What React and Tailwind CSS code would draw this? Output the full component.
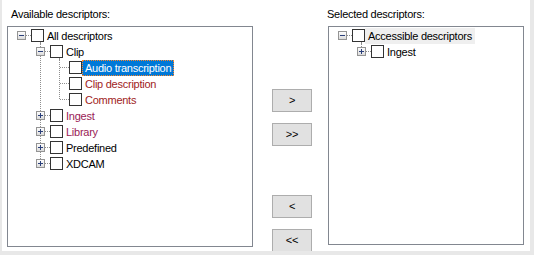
import React from "react";

const LINE = "#8e8e8e";

function cx(level) {
  return 13 + 19 * level;
}

function RowLines({ level, expander, lines }) {
  const w = cx(level) + 10;
  const c = cx(level);
  return (
    <svg width={w} height={16} className="shrink-0 block">
      {lines.map((l, i) => {
        const x = cx(l.col) + 0.5;
        const y2 = l.type === "top" ? 8 : 16;
        return (
          <line key={i} x1={x} y1={0} x2={x} y2={y2} stroke={LINE} strokeWidth={1} strokeDasharray="1 1" />
        );
      })}
      <line x1={expander ? c + 5 : c + 1} y1={7.5} x2={c + 10} y2={7.5} stroke={LINE} strokeWidth={1} strokeDasharray="1 1" />
      {expander && (
        <g>
          <defs>
            <linearGradient id={`g${level}`} x1="0" y1="0" x2="0" y2="1">
              <stop offset="0" stopColor="#ffffff" />
              <stop offset="1" stopColor="#d9d9d9" />
            </linearGradient>
          </defs>
          <rect x={c - 3.5} y={3.5} width={8} height={8} fill={`url(#g${level})`} stroke="#949494" strokeWidth={1} />
          <line x1={c - 2} y1={7.5} x2={c + 3} y2={7.5} stroke="#2a3f7a" strokeWidth={1} />
          {expander === "plus" && (
            <line x1={c + 0.5} y1={5} x2={c + 0.5} y2={10} stroke="#2a3f7a" strokeWidth={1} />
          )}
        </g>
      )}
    </svg>
  );
}

function Row({ level, expander, lines, tail, label, color, selected, hover }) {
  let spanCls = "h-4 px-[2px] border border-transparent leading-[14px] whitespace-nowrap";
  if (selected) spanCls = "h-4 px-[2px] border border-dotted border-[#ff8728] bg-[#0078d7] text-white leading-[14px] whitespace-nowrap";
  if (hover) spanCls = "h-4 px-[2px] border border-transparent bg-[#efefef] leading-[14px] whitespace-nowrap";
  return (
    <div className="flex h-4 items-start">
      <RowLines level={level} expander={expander} lines={lines} />
      <div className="flex flex-col h-4 w-[13px] shrink-0 pt-px">
        <div className="w-[13px] h-[13px] border border-[#333333] bg-white shrink-0" />
        {tail && <div className="ml-[9px] w-px flex-1 border-l border-dotted border-[#8e8e8e]" />}
      </div>
      <span className={spanCls} style={!selected && color ? { color } : undefined}>
        {label}
      </span>
    </div>
  );
}

const RED = "#a01c1c";
const PURPLE = "#9a1a55";

const leftRows = [
  { level: 0, expander: "minus", lines: [], tail: true, label: "All descriptors" },
  { level: 1, expander: "minus", lines: [{ col: 1, type: "full" }], tail: true, label: "Clip" },
  { level: 2, lines: [{ col: 1, type: "full" }, { col: 2, type: "full" }], label: "Audio transcription", selected: true },
  { level: 2, lines: [{ col: 1, type: "full" }, { col: 2, type: "full" }], label: "Clip description", color: RED },
  { level: 2, lines: [{ col: 1, type: "full" }, { col: 2, type: "top" }], label: "Comments", color: RED },
  { level: 1, expander: "plus", lines: [{ col: 1, type: "full" }], label: "Ingest", color: PURPLE },
  { level: 1, expander: "plus", lines: [{ col: 1, type: "full" }], label: "Library", color: PURPLE },
  { level: 1, expander: "plus", lines: [{ col: 1, type: "full" }], label: "Predefined" },
  { level: 1, expander: "plus", lines: [{ col: 1, type: "top" }], label: "XDCAM" },
];

const rightRows = [
  { level: 0, expander: "minus", lines: [], tail: true, label: "Accessible descriptors", hover: true },
  { level: 1, expander: "plus", lines: [{ col: 1, type: "top" }], label: "Ingest" },
];

function Tree({ rows, className }) {
  return (
    <div className={`border border-[#828790] bg-white flex flex-col pt-px overflow-hidden ${className}`}>
      {rows.map((r, i) => (
        <Row key={i} {...r} />
      ))}
    </div>
  );
}

function Btn({ children, className = "" }) {
  return (
    <div className={`w-[40px] h-[23px] shrink-0 border border-[#adadad] bg-[#e1e1e1] flex items-center justify-center text-[11px] text-black ${className}`}>
      {children}
    </div>
  );
}

export default function App() {
  return (
    <div className="w-[534px] h-[255px] bg-[#e8e8e8] flex items-start font-['Liberation_Sans',Arial,sans-serif] text-[11px] tracking-[-0.25px] text-black">
      <div className="ml-[2px] w-[528px] h-[251px] bg-white overflow-hidden flex items-start">
        <div className="ml-[5px] w-[246px] shrink-0 flex flex-col">
          <div className="mt-[8px] h-[13px] leading-[13px] pl-[4px]">Available descriptors:</div>
          <Tree rows={leftRows} className="mt-[5px] h-[221px]" />
        </div>
        <div className="ml-[19px] w-[40px] shrink-0 flex flex-col pt-[89px]">
          <Btn>&gt;</Btn>
          <Btn className="mt-[11px]">&gt;&gt;</Btn>
          <Btn className="mt-[49px]">&lt;</Btn>
          <Btn className="mt-[11px]">&lt;&lt;</Btn>
        </div>
        <div className="ml-[16px] w-[196px] shrink-0 flex flex-col">
          <div className="mt-[8px] h-[13px] leading-[13px] -ml-px">Selected descriptors:</div>
          <Tree rows={rightRows} className="mt-[5px] h-[219px]" />
        </div>
      </div>
    </div>
  );
}
